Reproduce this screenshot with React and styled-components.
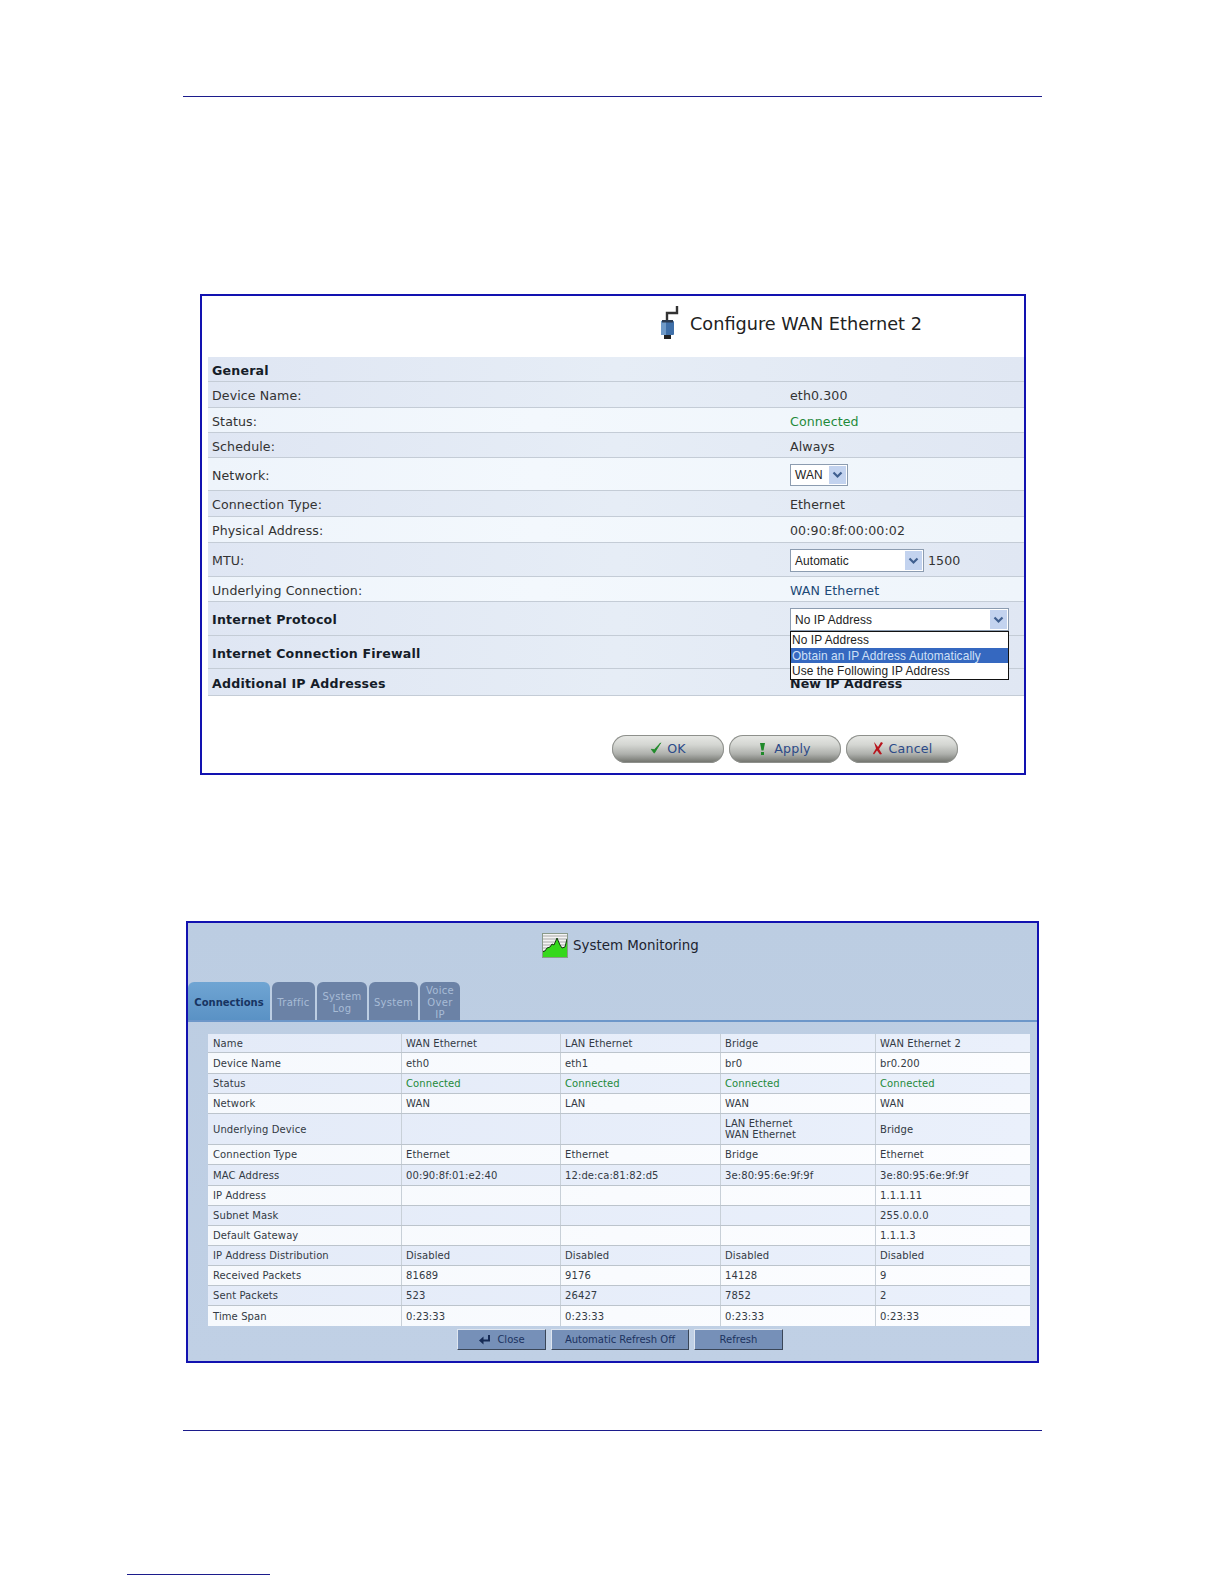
import React from 'react';
import styled, { createGlobalStyle } from 'styled-components';

const Global = createGlobalStyle`
  html, body { margin: 0; padding: 0; background: #fff; }
  body { font-family: "DejaVu Sans", Verdana, sans-serif; }
`;

const Sheet = styled.div`
  width: 1224px;
  height: 1584px;
  padding-top: 96px;
  box-sizing: border-box;
  display: flex;
  flex-direction: column;
  align-items: flex-start;
  overflow: hidden;
`;
const Rule = styled.div`
  width: 859px;
  height: 1px;
  margin: ${p => p.$top || 0}px 0 0 183px;
  background: #1c1c8c;
`;
const Footnote = styled.div`
  width: 143px;
  height: 1px;
  margin: 143px 0 0 127px;
  background: #1c1c8c;
`;

/* ---------- Figure 1 ---------- */
const ConfigFigure = styled.section`
  box-sizing: border-box;
  width: 826px;
  height: 481px;
  margin: 197px 0 0 200px;
  border: 2px solid #1212b0;
  background: #fff;
  display: flex;
  flex-direction: column;
`;
const ConfigHead = styled.header`
  height: 61px;
  display: flex;
  align-items: center;
  padding: 0 0 6px 457px;
  gap: 11px;
  font-size: 17.7px;
  color: #222;
  box-sizing: border-box;
  svg { margin-top: -2px; }
`;
const ConfigBody = styled.div`
  margin-left: 6px;
  display: flex;
  flex-direction: column;
`;
const ConfigRow = styled.div`
  box-sizing: border-box;
  height: ${p => p.$h}px;
  padding-top: 2px;
  display: flex;
  align-items: center;
  font-size: 12.6px;
  letter-spacing: 0.1px;
  color: #333;
  border-bottom: 1px solid #c4ccd6;
  background: ${p => p.$light
    ? 'linear-gradient(90deg,#eef4fb,#f3f8fd 40%,#eff5fb)'
    : 'linear-gradient(90deg,#dfe6f3,#e6edf6 50%,#e0e7f3)'};
`;
const ConfigLabel = styled.div`
  width: 582px;
  padding-left: 4px;
  box-sizing: border-box;
  font-weight: ${p => (p.$bold ? 700 : 400)};
  letter-spacing: ${p => (p.$bold ? '0.2px' : '0.1px')};
  color: ${p => (p.$bold ? '#151c28' : '#333')};
`;
const ConfigValue = styled.div`
  position: relative;
  flex: 1;
  display: flex;
  align-items: center;
  gap: 4px;
  color: ${p => p.$color || '#333'};
  font-weight: ${p => (p.$bold ? 700 : 400)};
`;
const SelectBox = styled.div`
  box-sizing: border-box;
  width: ${p => p.$w}px;
  height: ${p => p.$h}px;
  background: #fff;
  border: 1px solid #8c9cb0;
  display: flex;
  align-items: center;
  padding-left: 4px;
  font: 11.9px "Liberation Sans", Arial, sans-serif;
  color: #222;
  justify-content: space-between;
`;
const SelectArrow = styled.span`
  width: 17px;
  align-self: stretch;
  margin: 1px;
  background: #c3d3ef;
  display: flex;
  align-items: center;
  justify-content: center;
`;
const DropList = styled.div`
  position: absolute;
  left: 0;
  top: 23px;
  z-index: 2;
  box-sizing: border-box;
  width: 219px;
  height: 49px;
  background: #fff;
  border: 1px solid #111;
  font: 11.9px "Liberation Sans", Arial, sans-serif;
  color: #222;
  display: flex;
  flex-direction: column;
`;
const DropItem = styled.div`
  flex: 1;
  display: flex;
  align-items: center;
  padding-left: 1px;
  white-space: nowrap;
  background: ${p => (p.$on ? '#3568c0' : '#fff')};
  color: ${p => (p.$on ? '#cfe0f7' : '#222')};
`;
const PillRow = styled.div`
  display: flex;
  gap: 5px;
  margin: 39px 0 0 410px;
`;
const Pill = styled.div`
  box-sizing: border-box;
  width: 112px;
  height: 28px;
  padding-bottom: 2px;
  border-radius: 14px;
  background: linear-gradient(180deg,#e8e9e6 0%,#d4d6d2 35%,#aeb0ac 68%,#6c6e68 100%);
  box-shadow: inset 0 0 0 1px #8e908c;
  display: flex;
  align-items: center;
  justify-content: center;
  gap: ${p => p.$gap}px;
  font-size: 12.6px;
  letter-spacing: 0.2px;
  color: #2c4a88;
`;

/* ---------- Figure 2 ---------- */
const MonitorFigure = styled.section`
  box-sizing: border-box;
  width: 853px;
  height: 442px;
  margin: 146px 0 0 186px;
  border: 2px solid #1212b0;
  background: linear-gradient(180deg,#bccde2,#c0d0e5);
  display: flex;
  flex-direction: column;
`;
const MonitorHead = styled.header`
  height: 59px;
  display: flex;
  align-items: center;
  gap: 5px;
  padding: 0 0 15px 354px;
  box-sizing: border-box;
  font-size: 13.4px;
  color: #1c2430;
`;
const TabBar = styled.nav`
  display: flex;
  align-items: flex-end;
  gap: 2px;
  height: 38px;
  border-bottom: 2px solid #6d97c9;
`;
const Tab = styled.div`
  box-sizing: border-box;
  width: ${p => p.$w}px;
  height: 100%;
  padding-top: 3px;
  border-radius: 6px 6px 0 0;
  background: ${p => (p.$on ? 'linear-gradient(180deg,#6fa5d3,#5a92c5)' : '#6b82a6')};
  color: ${p => (p.$on ? '#173462' : '#a8bcd6')};
  font-size: 10px;
  line-height: 12px;
  font-weight: ${p => (p.$on ? 700 : 400)};
  letter-spacing: ${p => (p.$on ? '0' : '0.3px')};
  text-align: center;
  display: flex;
  align-items: center;
  justify-content: center;
`;
const Table = styled.div`
  margin: 12px 0 0 20px;
  width: 822px;
  display: flex;
  flex-direction: column;
`;
const TRow = styled.div`
  box-sizing: border-box;
  height: ${p => p.$h}px;
  display: grid;
  grid-template-columns: 193px 159px 160px 155px 155px;
  border-bottom: ${p => (p.$last ? 'none' : '1px solid #bcc4cc')};
  background: ${p => (p.$light
    ? 'linear-gradient(90deg,#f6f9fd,#fcfdff)'
    : 'linear-gradient(90deg,#e4ebf8,#eaf0fb)')};
`;
const TCell = styled.div`
  box-sizing: border-box;
  padding-left: ${p => (p.$first ? 5 : 4)}px;
  display: flex;
  align-items: center;
  font-size: 10px;
  line-height: 11px;
  letter-spacing: 0.1px;
  color: ${p => p.$color || '#333a44'};
  border-left: ${p => (p.$first ? 'none' : '1px solid #c8d0d8')};
`;
const BarRow = styled.div`
  display: flex;
  gap: 5px;
  margin: 3px 0 0 269px;
`;
const FlatButton = styled.div`
  box-sizing: border-box;
  width: ${p => p.$w}px;
  height: 21px;
  background: #7690b8;
  border-top: 1px solid #dfe6f0;
  border-left: 1px solid #dfe6f0;
  border-right: 1px solid #3a4658;
  border-bottom: 1px solid #3a4658;
  display: flex;
  align-items: center;
  justify-content: center;
  gap: 6px;
  font-size: 10px;
  color: #1c3360;
`;

const Arrow = () => (
  <svg width="11" height="8" viewBox="0 0 11 8">
    <path d="M1.5 1.5 5.5 5.5 9.5 1.5" fill="none" stroke="#3f5f8f" strokeWidth="2.2" />
  </svg>
);
const PlugIcon = () => (
  <svg width="20" height="34" viewBox="0 0 20 34">
    <path d="M8 16V7h10V0" fill="none" stroke="#333" strokeWidth="2.4" />
    <rect x="2" y="15" width="13" height="14" rx="1" fill="#3f6fa8" />
    <rect x="2" y="15" width="5" height="14" fill="#6f9ac8" />
    <rect x="5" y="29" width="7" height="4" fill="#222" />
    <rect x="3" y="14" width="11" height="2.5" fill="#2a3a50" />
  </svg>
);
const ChartIcon = () => (
  <svg width="26" height="25" viewBox="0 0 26 25">
    <rect width="26" height="25" fill="#f4f4f4" />
    <path d="M0 3h26M0 6h26M0 9h26M0 12h26M0 15h26M0 18h26M0 21h26" stroke="#a8a8a8" strokeWidth="1" />
    <path d="M0 24V19l3-1 2-3 3-1 2-3 2 1 3-7 3 7 2 3 3-1 2-8 1 1v17z" fill="#35d81c" />
    <path d="M0 19l3-1 2-3 3-1 2-3 2 1 3-7 3 7 2 3 3-1 2-8 1 1" fill="none" stroke="#143a10" strokeWidth="1" />
    <rect x="0.5" y="0.5" width="25" height="24" fill="none" stroke="#8a9a8a" />
  </svg>
);
const Check = () => (
  <svg width="12" height="14" viewBox="0 0 14 15">
    <path d="M1.5 9 5 13.5 12.5 1.5 5 9.5z" fill="#1f8a2a" stroke="#1f8a2a" strokeWidth="1" />
  </svg>
);
const Bang = () => (
  <svg width="7" height="13" viewBox="0 0 7 13">
    <path d="M1 1h5L4.5 8.5h-2z" fill="#1f8a2a" />
    <rect x="2" y="10" width="3" height="3" fill="#1f8a2a" />
  </svg>
);
const Cross = () => (
  <svg width="12" height="14" viewBox="0 0 12 14">
    <path d="M2 1c2 2 3 4 4 5l3-5 2 1-4 6 3 5-2 .5-3-4-3 4-1-1 3-5z" fill="#b8141c" />
  </svg>
);
const ReturnIcon = () => (
  <svg width="13" height="10" viewBox="0 0 13 10">
    <path d="M11 0v5.5H5" fill="none" stroke="#152a55" strokeWidth="2" />
    <path d="M5.5 1.5 1 5.5l4.5 4z" fill="#152a55" />
  </svg>
);

const GREEN = '#1f8a3a';
const columns = [
  ['Name', ['WAN Ethernet', 'LAN Ethernet', 'Bridge', 'WAN Ethernet 2'], 19],
  ['Device Name', ['eth0', 'eth1', 'br0', 'br0.200'], 21],
  ['Status', ['Connected', 'Connected', 'Connected', 'Connected'], 20],
  ['Network', ['WAN', 'LAN', 'WAN', 'WAN'], 20],
  ['Underlying Device', ['', '', 'LAN Ethernet\nWAN Ethernet', 'Bridge'], 31],
  ['Connection Type', ['Ethernet', 'Ethernet', 'Bridge', 'Ethernet'], 20],
  ['MAC Address', ['00:90:8f:01:e2:40', '12:de:ca:81:82:d5', '3e:80:95:6e:9f:9f', '3e:80:95:6e:9f:9f'], 21],
  ['IP Address', ['', '', '', '1.1.1.11'], 20],
  ['Subnet Mask', ['', '', '', '255.0.0.0'], 20],
  ['Default Gateway', ['', '', '', '1.1.1.3'], 20],
  ['IP Address Distribution', ['Disabled', 'Disabled', 'Disabled', 'Disabled'], 20],
  ['Received Packets', ['81689', '9176', '14128', '9'], 20],
  ['Sent Packets', ['523', '26427', '7852', '2'], 20],
  ['Time Span', ['0:23:33', '0:23:33', '0:23:33', '0:23:33'], 20],
];

const tabs = [
  ['Connections', 82, true],
  ['Traffic', 43],
  ['System\nLog', 50],
  ['System', 49],
  ['Voice\nOver\nIP', 40],
];

const Lines = ({ text }) =>
  text.split('\n').map((t, i) => (
    <React.Fragment key={i}>
      {i > 0 && <br />}
      {t}
    </React.Fragment>
  ));

export default function App() {
  return (
    <Sheet>
      <Global />
      <Rule />
      <ConfigFigure>
        <ConfigHead>
          <PlugIcon />
          Configure WAN Ethernet 2
        </ConfigHead>
        <ConfigBody>
          <ConfigRow $h={25}><ConfigLabel $bold>General</ConfigLabel></ConfigRow>
          <ConfigRow $h={26}><ConfigLabel>Device Name:</ConfigLabel><ConfigValue>eth0.300</ConfigValue></ConfigRow>
          <ConfigRow $h={25} $light><ConfigLabel>Status:</ConfigLabel><ConfigValue $color={GREEN}>Connected</ConfigValue></ConfigRow>
          <ConfigRow $h={25}><ConfigLabel>Schedule:</ConfigLabel><ConfigValue>Always</ConfigValue></ConfigRow>
          <ConfigRow $h={33} $light>
            <ConfigLabel>Network:</ConfigLabel>
            <ConfigValue><SelectBox $w={58} $h={22}>WAN<SelectArrow><Arrow /></SelectArrow></SelectBox></ConfigValue>
          </ConfigRow>
          <ConfigRow $h={26}><ConfigLabel>Connection Type:</ConfigLabel><ConfigValue>Ethernet</ConfigValue></ConfigRow>
          <ConfigRow $h={26} $light><ConfigLabel>Physical Address:</ConfigLabel><ConfigValue>00:90:8f:00:00:02</ConfigValue></ConfigRow>
          <ConfigRow $h={34}>
            <ConfigLabel>MTU:</ConfigLabel>
            <ConfigValue><SelectBox $w={134} $h={23}>Automatic<SelectArrow><Arrow /></SelectArrow></SelectBox>1500</ConfigValue>
          </ConfigRow>
          <ConfigRow $h={25} $light><ConfigLabel>Underlying Connection:</ConfigLabel><ConfigValue $color="#1d4a78">WAN Ethernet</ConfigValue></ConfigRow>
          <ConfigRow $h={34}>
            <ConfigLabel $bold>Internet Protocol</ConfigLabel>
            <ConfigValue>
              <SelectBox $w={219} $h={23}>No IP Address<SelectArrow><Arrow /></SelectArrow></SelectBox>
              <DropList>
                <DropItem>No IP Address</DropItem>
                <DropItem $on>Obtain an IP Address Automatically</DropItem>
                <DropItem>Use the Following IP Address</DropItem>
              </DropList>
            </ConfigValue>
          </ConfigRow>
          <ConfigRow $h={33}><ConfigLabel $bold>Internet Connection Firewall</ConfigLabel></ConfigRow>
          <ConfigRow $h={27}><ConfigLabel $bold>Additional IP Addresses</ConfigLabel><ConfigValue $bold $color="#151c28">New IP Address</ConfigValue></ConfigRow>
        </ConfigBody>
        <PillRow>
          <Pill $gap={5}><Check />OK</Pill>
          <Pill $gap={8}><Bang />Apply</Pill>
          <Pill $gap={5}><Cross />Cancel</Pill>
        </PillRow>
      </ConfigFigure>

      <MonitorFigure>
        <MonitorHead>
          <ChartIcon />
          System Monitoring
        </MonitorHead>
        <TabBar>
          {tabs.map(([t, w, on]) => (
            <Tab key={t} $w={w} $on={on}><span><Lines text={t} /></span></Tab>
          ))}
        </TabBar>
        <Table>
          {columns.map(([name, vals, h], i) => (
            <TRow key={name} $h={h} $light={i % 2 === 1} $last={i === columns.length - 1}>
              <TCell $first>{name}</TCell>
              {vals.map((v, j) => (
                <TCell key={j} $color={v === 'Connected' ? GREEN : undefined}>
                  <span><Lines text={v} /></span>
                </TCell>
              ))}
            </TRow>
          ))}
        </Table>
        <BarRow>
          <FlatButton $w={89}><ReturnIcon />Close</FlatButton>
          <FlatButton $w={138}>Automatic Refresh Off</FlatButton>
          <FlatButton $w={89}>Refresh</FlatButton>
        </BarRow>
      </MonitorFigure>
      <Rule $top={67} />
      <Footnote />
    </Sheet>
  );
}
